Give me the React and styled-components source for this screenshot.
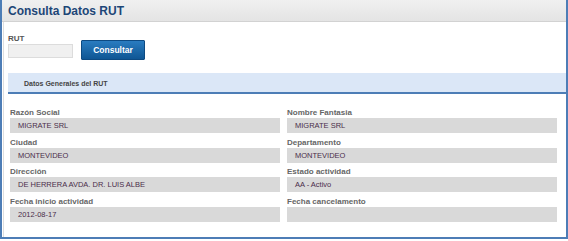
import React from 'react'
import styled, { createGlobalStyle } from 'styled-components'

const Global = createGlobalStyle`
  html, body {
    margin: 0;
    padding: 0;
    background: #fff;
  }
  body {
    font-family: "Liberation Sans", Arial, sans-serif;
  }
`

const Frame = styled.div`
  width: 568px;
  height: 239px;
  box-sizing: border-box;
  border-left: 2px solid #4d7db6;
  border-right: 2px solid #4d7db6;
  border-bottom: 2px solid #4d7db6;
  display: flex;
  flex-direction: column;
`

const TitleBar = styled.div`
  height: 21px;
  background: linear-gradient(#f0f0f0, #e4e4e4);
  border-bottom: 1px solid #d2d2d2;
  padding-left: 6px;
  display: flex;
  align-items: center;
  & h1 {
    margin: 0;
    font-size: 12px;
    font-weight: bold;
    color: #1d4677;
  }
`

const Body = styled.div`
  flex: 1;
  margin-left: 1px;
  border-left: 1px solid #dedede;
  display: flex;
  flex-direction: column;
`

const SearchRow = styled.div`
  display: flex;
  align-items: flex-start;
  gap: 8px;
  padding: 12px 0 0 4px;
`

const Label = styled.label`
  display: block;
  height: 10px;
  line-height: 10px;
  font-size: 8px;
  font-weight: bold;
  color: ${p => (p.$muted ? '#666' : '#555')};
`

const Input = styled.input`
  display: block;
  box-sizing: border-box;
  width: 65px;
  height: 14px;
  margin: 0;
  border: 1px solid #dcdcdc;
  background: #f0f0f0;
`

const Button = styled.button`
  margin-top: 6px;
  width: 64px;
  height: 20px;
  border: 1px solid #0d4a82;
  border-radius: 1px;
  background: linear-gradient(#2a7cc0, #0f5694);
  color: #fff;
  font-family: inherit;
  font-size: 8.5px;
  font-weight: bold;
  padding: 0;
`

const SectionHeader = styled.div`
  margin: 13px 0 0 4px;
  height: 21px;
  background: #dbe7f7;
  border-bottom: 2px solid #4d7db6;
  padding: 2px 0 0 16px;
  box-sizing: border-box;
  display: flex;
  align-items: center;
  font-size: 7px;
  font-weight: bold;
  color: #444;
`

const Grid = styled.div`
  display: grid;
  grid-template-columns: 270px 270px;
  column-gap: 7px;
  row-gap: 4.6px;
  padding: 14px 0 0 6px;
`

const Cell = styled.div`
  display: flex;
  flex-direction: column;
`

const Value = styled.div`
  height: 15px;
  line-height: 15px;
  background: #d9d9d9;
  padding-left: 8px;
  font-size: 7.5px;
  color: #4a2d4a;
`

const fields = [
  ['Razón Social', 'MIGRATE SRL'],
  ['Nombre Fantasia', 'MIGRATE SRL'],
  ['Ciudad', 'MONTEVIDEO'],
  ['Departamento', 'MONTEVIDEO'],
  ['Dirección', 'DE HERRERA AVDA. DR. LUIS ALBE'],
  ['Estado actividad', 'AA - Activo'],
  ['Fecha inicio actividad', '2012-08-17'],
  ['Fecha cancelamento', ''],
]

export default function App() {
  return (
    <>
      <Global />
      <Frame>
        <TitleBar>
          <h1>Consulta Datos RUT</h1>
        </TitleBar>
        <Body>
          <SearchRow>
            <div>
              <Label>RUT</Label>
              <Input />
            </div>
            <Button>Consultar</Button>
          </SearchRow>
          <SectionHeader>Datos Generales del RUT</SectionHeader>
          <Grid>
            {fields.map(([label, value]) => (
              <Cell key={label}>
                <Label $muted>{label}</Label>
                <Value>{value}</Value>
              </Cell>
            ))}
          </Grid>
        </Body>
      </Frame>
    </>
  )
}
